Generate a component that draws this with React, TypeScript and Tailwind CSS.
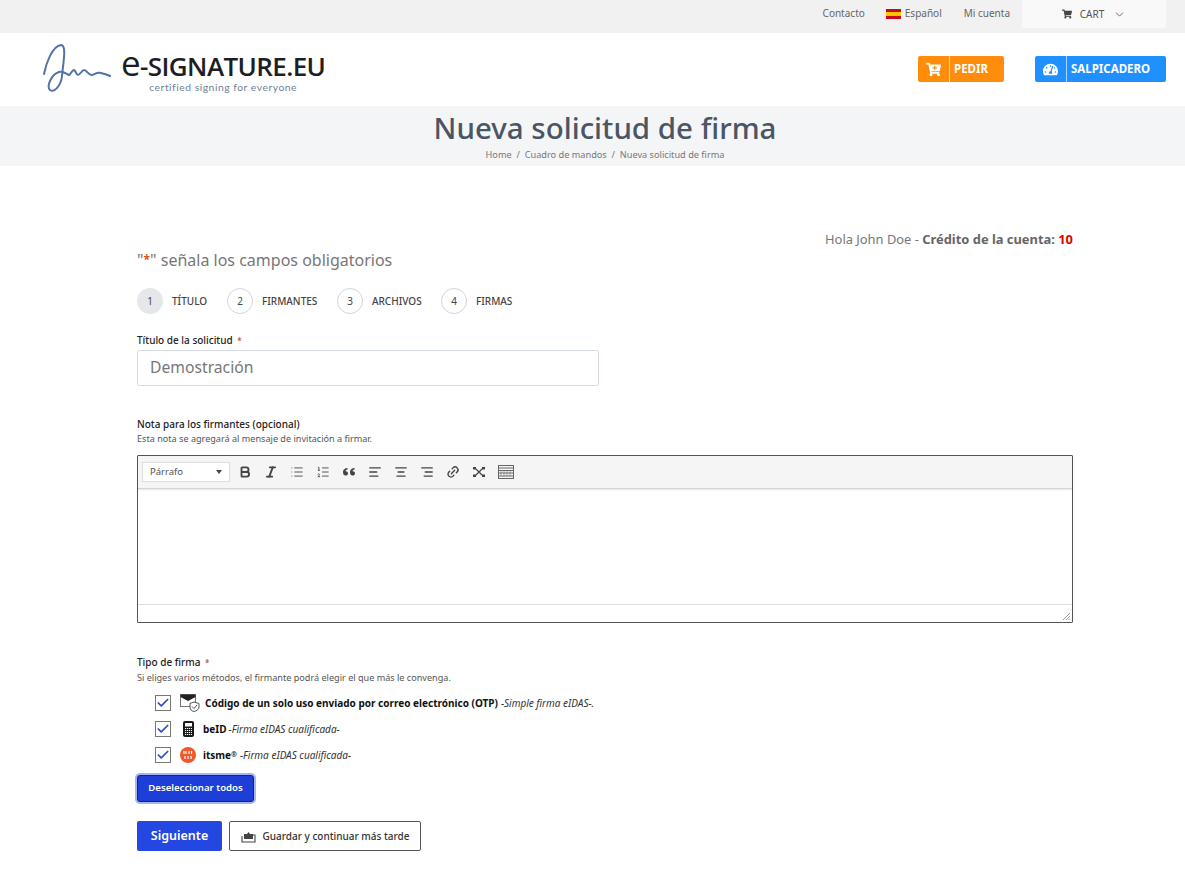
// Signature request form page: top bar, logo header, title band and first form step.
import { ChevronDown, Bold, Italic, List, ListOrdered, AlignLeft, AlignCenter, AlignRight, Link2, Check } from "lucide-react"
import { FaCartPlus, FaShoppingCart, FaTachometerAlt } from "react-icons/fa"

const STEPS = [
  { n: 1, label: "TÍTULO", w: "w-[90px]" },
  { n: 2, label: "FIRMANTES", w: "w-[110px]" },
  { n: 3, label: "ARCHIVOS", w: "w-[104px]" },
  { n: 4, label: "FIRMAS", w: "w-[90px]" },
]

function Logo() {
  return (
    <div className="flex items-start">
      <svg width="70" height="50" viewBox="0 0 70 50" className="mt-[11px] shrink-0">
        <path
          d="M1 30 C3 20 9 2 18 1 C24 1 20 20 19 32 C18 42 11 49 7 46 C3 42 9 30 16 28 C21 27 23 30 26 31 C28 30 29 26 31 26 C33 27 33 31 35 31 C37 31 39 26 41 26 C44 26 46 32 49 31 C52 30 54 28 58 29 C62 30 65 31 67 32"
          fill="none"
          stroke="#5273a8"
          strokeWidth="2"
          strokeLinecap="round"
        />
      </svg>
      <div className="ml-[8px] flex flex-col items-center">
        <div className="h-[30px] mt-[15px] text-[26px] leading-[30px] font-semibold text-[#1d1d24] font-['Open_Sans',sans-serif] tracking-[-0.6px] whitespace-nowrap">
          <span className="text-[35px] font-normal">e</span>-SIGNATURE.EU
        </div>
        <div className="text-[10.4px] leading-[14px] mt-[2px] text-[#6f7f97] tracking-[0.5px] font-['Lato',sans-serif]">certified signing for everyone</div>
      </div>
    </div>
  )
}

function Flag() {
  return (
    <span className="inline-flex flex-col w-[15px] h-[10px] mr-[4px]">
      <span className="h-[3px] bg-[#c60b1e]" />
      <span className="h-[4px] bg-[#ffc400]" />
      <span className="h-[3px] bg-[#c60b1e]" />
    </span>
  )
}

function Box() {
  return (
    <span className="w-[16px] h-[16px] border border-[#777] bg-white flex items-center justify-center shrink-0">
      <Check size={16} strokeWidth={3} className="text-[#2b50c8]" />
    </span>
  )
}

function QuoteIcon() {
  return (
    <svg width="14" height="14" viewBox="0 0 14 14" fill="#444">
      <path d="M1 7 C1 4.5 3 3.2 5.5 3 L5.5 4.6 C4.4 4.8 3.7 5.3 3.5 6.2 C5 6.1 6 6.8 6 8.3 C6 9.8 5 10.6 3.6 10.6 C2 10.6 1 9.4 1 7 Z" />
      <path d="M8 7 C8 4.5 10 3.2 12.5 3 L12.5 4.6 C11.4 4.8 10.7 5.3 10.5 6.2 C12 6.1 13 6.8 13 8.3 C13 9.8 12 10.6 10.6 10.6 C9 10.6 8 9.4 8 7 Z" />
    </svg>
  )
}

function FullscreenIcon() {
  return (
    <svg width="14" height="14" viewBox="0 0 14 14" fill="none" stroke="#444" strokeWidth="1.2">
      <path d="M4 4 L10 10 M10 4 L4 10" />
      <rect x="1" y="2" width="3" height="2.5" fill="#444" stroke="none" />
      <rect x="10" y="2" width="3" height="2.5" fill="#444" stroke="none" />
      <rect x="1" y="9.5" width="3" height="2.5" fill="#444" stroke="none" />
      <rect x="10" y="9.5" width="3" height="2.5" fill="#444" stroke="none" />
    </svg>
  )
}

function KeyboardIcon() {
  return (
    <svg width="16" height="14" viewBox="0 0 16 14" fill="none" stroke="#666" strokeWidth="1">
      <rect x="0.5" y="0.5" width="15" height="13" />
      <path d="M0.5 3 H15.5 M0.5 5.5 H15.5 M0.5 8 H15.5 M0.5 11 H15.5" />
      <path d="M3 5.5 V11 M6 5.5 V11 M9 5.5 V11 M12 5.5 V11" strokeDasharray="1 1" />
    </svg>
  )
}

function MailIcon() {
  return (
    <svg width="20" height="18" viewBox="0 0 20 18" fill="none">
      <rect x="0.5" y="0.5" width="15" height="12" stroke="#777" fill="#fff" />
      <path d="M0.5 0.5 H15.5 V3 L8 7 L0.5 3 Z" fill="#222" />
      <path d="M14 8 L19 9.5 V13 C19 15.5 16.5 17 14 17.5 C11.5 17 10 15.5 10 13 V9.5 Z" fill="#fff" stroke="#555" />
      <path d="M12 12.5 L14 14.5 L17 11" stroke="#555" />
    </svg>
  )
}

function CardIcon() {
  return (
    <svg width="11" height="16" viewBox="0 0 11 16">
      <rect x="0" y="0" width="11" height="16" rx="2" fill="#1a1a1a" />
      <rect x="2" y="2" width="7" height="3.5" fill="#fff" />
      <path d="M2 7.5 H9 M2 9.5 H9 M2 11.5 H9 M2 13.5 H9" stroke="#fff" strokeWidth="1" strokeDasharray="1.2 0.8" />
    </svg>
  )
}

function ItsmeIcon() {
  return (
    <svg width="16" height="16" viewBox="0 0 16 16">
      <circle cx="8" cy="8" r="8" fill="#f0582c" />
      <path d="M4 4 V7 M6 4 V7 M9 4 V7 M11.5 4 V7 M5 9 V12 M8 9 V12 M11 9 V12" stroke="#fff" strokeWidth="1.2" />
    </svg>
  )
}

function SaveIcon() {
  return (
    <svg width="15" height="13" viewBox="0 0 15 13" fill="none" stroke="#444" strokeWidth="1.1">
      <path d="M1 6 V12 H14 V5 H12" />
      <path d="M3 4 H6 L7.5 2 L9 4 H12 V9 H3 Z" fill="#444" stroke="none" />
    </svg>
  )
}

export default function App() {
  return (
    <div className="min-h-[876px] bg-white font-['Noto_Sans',sans-serif] text-[#333] overflow-hidden">
      {/* top bar */}
      <div className="h-[33px] bg-[#f1f1f1] flex justify-end pr-[19px] text-[10px] text-[#666]">
        <div className="flex items-center h-[27px]">
          <a className="mr-[21px]">Contacto</a>
          <a className="mr-[22px] flex items-center"><Flag />Español</a>
          <a className="mr-[12px]">Mi cuenta</a>
        </div>
        <div className="w-[144px] h-[28px] bg-[#f9f9f9] flex items-center justify-center gap-[8px] text-[#555]">
          <FaShoppingCart size={10} className="text-[#444]" />
          <span>CART</span>
          <ChevronDown size={13} strokeWidth={1.5} className="ml-[1px]" />
        </div>
      </div>

      {/* header */}
      <div className="h-[73px] flex justify-between pl-[43px] pr-[19px]">
        <Logo />
        <div className="flex gap-[31px] pt-[23px]">
          <button className="h-[26px] w-[86px] flex items-center bg-[#ff8c0a] rounded-[2px] text-white text-[11.5px] font-bold">
            <span className="w-[32px] h-full flex items-center justify-center border-r border-[#ffd9a8]">
              <FaCartPlus size={15} />
            </span>
            <span className="pl-[4px]">PEDIR</span>
          </button>
          <button className="h-[26px] w-[131px] flex items-center bg-[#1e90ff] rounded-[2px] text-white text-[11.5px] font-bold">
            <span className="w-[32px] h-full flex items-center justify-center border-r border-[#a8d4ff]">
              <FaTachometerAlt size={15} />
            </span>
            <span className="pl-[4px]">SALPICADERO</span>
          </button>
        </div>
      </div>

      {/* title band */}
      <div className="h-[60px] bg-[#f4f5f7] flex flex-col items-center pl-[25px]">
        <h1 className="text-[29.5px] leading-[42px] mt-[1px] font-medium text-[#4b5563]">Nueva solicitud de firma</h1>
        <div className="text-[9.2px] leading-[14px] text-[#777] -mt-[1px] whitespace-pre">Home  /  Cuadro de mandos  /  Nueva solicitud de firma</div>
      </div>

      {/* form */}
      <div className="mx-[137px] w-[936px] pt-[65px]">
        <div className="text-right text-[12.9px] leading-[17px] text-[#777]">
          Hola John Doe - <b className="text-[#666]">Crédito de la cuenta:</b> <b className="text-[#e00000]">10</b>
        </div>
        <div className="text-[16px] leading-[22px] text-[#777] mt-[1px]">
          "<span className="text-[#e0501f] text-[12px] font-bold align-[2px]">*</span>" señala los campos obligatorios
        </div>

        <div className="flex items-center mt-[17px]">
          {STEPS.map(s => (
            <div key={s.n} className={`flex items-center ${s.w}`}>
              <span className={`w-[26px] h-[26px] rounded-full flex items-center justify-center text-[10px] text-[#444] shrink-0 ${s.n === 1 ? "bg-[#e5e7eb]" : "border border-[#d1d5db]"}`}>
                {s.n}
              </span>
              <span className="ml-[9px] text-[10px] font-medium text-[#444]">{s.label}</span>
            </div>
          ))}
        </div>

        <label className="block mt-[19px] text-[10px] leading-[15px] font-medium text-[#222]">
          Título de la solicitud <span className="ml-[2px] text-[8px] text-[#b04a3a]">*</span>
        </label>
        <div className="mt-[2px] w-[462px] h-[36px] border border-[#d5dbe3] rounded-[2px] flex items-center px-[12px] text-[15.7px] text-[#777]">
          Demostración
        </div>

        <div className="mt-[31px] text-[10px] leading-[15px] font-medium text-[#222]">Nota para los firmantes (opcional)</div>
        <div className="text-[9.1px] leading-[14px] text-[#555]">Esta nota se agregará al mensaje de invitación a firmar.</div>

        <div className="mt-[9px] h-[168px] border border-[#555] rounded-[1px] flex flex-col">
          <div className="h-[33px] bg-[#f5f5f5] border-b border-[#d4d4d4] shadow-[0_1px_2px_rgba(0,0,0,0.1)] flex items-center pl-[4px] text-[#444]">
            <div className="w-[88px] h-[20px] bg-white border border-[#ddd] flex items-center justify-between px-[7px] text-[9.5px] text-[#555]">
              Párrafo
              <span className="w-0 h-0 border-x-[3px] border-x-transparent border-t-[4px] border-t-[#444]" />
            </div>
            <div className="flex items-center gap-[12px] ml-[8px]">
              <Bold size={14} strokeWidth={3.2} />
              <Italic size={14} strokeWidth={3.2} />
              <List size={14} strokeWidth={1.5} />
              <ListOrdered size={14} strokeWidth={1.5} />
              <QuoteIcon />
              <AlignLeft size={14} strokeWidth={2.2} />
              <AlignCenter size={14} strokeWidth={2.2} />
              <AlignRight size={14} strokeWidth={2.2} />
              <Link2 size={14} strokeWidth={2.4} className="-rotate-45" />
              <FullscreenIcon />
              <KeyboardIcon />
            </div>
          </div>
          <div className="flex-1" />
          <div className="h-[18px] border-t border-[#ddd] flex justify-end items-end pr-[2px] pb-[2px]">
            <svg width="7" height="7" viewBox="0 0 7 7" stroke="#999" strokeWidth="1">
              <path d="M7 0 L0 7 M7 3 L3 7 M7 5.5 L5.5 7" />
            </svg>
          </div>
        </div>

        <div className="mt-[32px] text-[10px] leading-[15px] font-medium text-[#222]">
          Tipo de firma <span className="ml-[2px] text-[8px] text-[#b04a3a]">*</span>
        </div>
        <div className="mt-[1px] text-[9.1px] leading-[14px] text-[#555]">Si eliges varios métodos, el firmante podrá elegir el que más le convenga.</div>

        <div className="mt-[10px] pl-[18px] flex flex-col gap-[10px] text-[10px] text-[#333]">
          <div className="h-[16px] flex items-center">
            <Box />
            <span className="ml-[9px]"><MailIcon /></span>
            <b className="ml-[5px] text-[#111]">Código de un solo uso enviado por correo electrónico (OTP)</b>
            <i className="ml-[3px]">-Simple firma eIDAS-.</i>
          </div>
          <div className="h-[16px] flex items-center">
            <Box />
            <span className="ml-[12px]"><CardIcon /></span>
            <b className="ml-[9px] text-[#111]">beID</b>
            <i className="ml-[2px]">-Firma eIDAS cualificada-</i>
          </div>
          <div className="h-[16px] flex items-center">
            <Box />
            <span className="ml-[9px]"><ItsmeIcon /></span>
            <b className="ml-[7px] text-[#111]">itsme<span className="text-[7px] align-[2px]">®</span></b>
            <i className="ml-[3px]">-Firma eIDAS cualificada-</i>
          </div>
        </div>

        <button className="block mt-[12px] w-[117px] h-[27px] bg-[#1d3fd8] rounded-[3px] ring-2 ring-[#a9b5ee] border border-[#10257f] text-white text-[9.6px] font-semibold">
          Deseleccionar todos
        </button>

        <div className="flex gap-[7px] mt-[19px]">
          <button className="w-[85px] h-[30px] bg-[#2347e0] rounded-[2px] text-white text-[12.5px] font-semibold">Siguiente</button>
          <button className="w-[192px] h-[30px] bg-white border border-[#555] rounded-[2px] flex items-center justify-center gap-[7px] text-[10px] font-medium text-[#333]">
            <SaveIcon />
            Guardar y continuar más tarde
          </button>
        </div>
      </div>
    </div>
  )
}
